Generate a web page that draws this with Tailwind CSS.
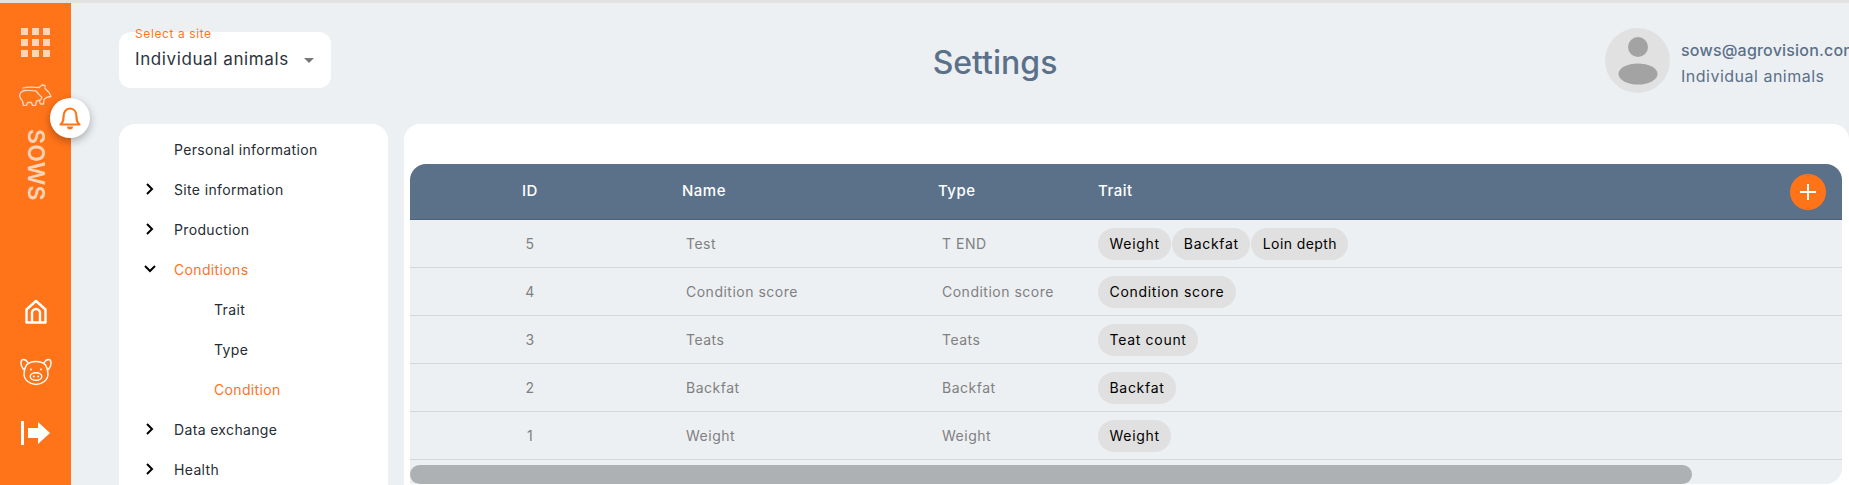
<!DOCTYPE html>
<html>
<head>
<meta charset="utf-8">
<script src="https://cdn.jsdelivr.net/npm/@tailwindcss/browser@4"></script>
</head>
<body class="h-[485px] overflow-hidden bg-[#edf0f3] font-['Inter',sans-serif] tracking-[0.3px]">
<div class="h-[3px] bg-[#e2e2e2]"></div>
<div class="flex h-[482px]">
  <aside class="relative w-[71px] shrink-0 bg-[#ff7419] flex flex-col items-center">
    <div class="mt-[25px] grid grid-cols-3 gap-[4px] w-[29px]">
      <i class="block h-[7px] bg-white/70"></i><i class="block h-[7px] bg-white/70"></i><i class="block h-[7px] bg-white/70"></i>
      <i class="block h-[7px] bg-white/70"></i><i class="block h-[7px] bg-white/70"></i><i class="block h-[7px] bg-white/70"></i>
      <i class="block h-[7px] bg-white/70"></i><i class="block h-[7px] bg-white/70"></i><i class="block h-[7px] bg-white/70"></i>
    </div>
    <svg class="mt-[26px] opacity-70" width="33" height="23" viewBox="18 83 33 23" fill="none" stroke="#fff" stroke-width="1.300" stroke-linejoin="round" stroke-linecap="round">
      <path d="M22 88c5-1.500 11-.5 16-.5l3-2.500 3 .5v3l4 4 2 4-4.500 1-2.500 2-.5 4.500h-3l-1-2.500"/>
      <path d="M19 97c-1-3 1-6 5-6.500 4-.5 8 .5 11 .5l2.500 3 3.500 3.500-1.500 2.500-4 1-1 4.500h-3l-1-3h-4l-1 3h-3l-1-4.500c-1-1-2-2-2.500-4z"/>
    </svg>
    <div class="mt-[24px] h-[70px] flex items-center justify-center [writing-mode:vertical-rl] text-[23px] font-semibold leading-none text-white/70">SOWS</div>
    <svg class="mt-[99px]" width="24" height="26" viewBox="0 0 24 26" fill="none" stroke="#fff" stroke-width="2.400" stroke-linejoin="round">
      <path d="M2.500 23.500V10.500L12 2l9.500 8.500v13z"/>
      <path d="M8 23.500V14a4 4 0 0 1 8 0v9.500"/>
    </svg>
    <svg class="mt-[31px]" width="32" height="30" viewBox="0 0 32 30" fill="none" stroke="#fff" stroke-width="1.400">
      <path d="M8 7C5.500 2.500 1 2.500 1 6.500c0 3.500 1.500 6 3.500 7.500"/>
      <path d="M24 7C26.500 2.500 31 2.500 31 6.500c0 3.500-1.500 6-3.500 7.500"/>
      <path d="M6.500 9C9 6.500 12.500 5.500 16 5.500S23 6.500 25.500 9C27.500 12 28 15 28 18c0 6-6 10.500-12 10.500S4 24 4 18c0-3 .5-6 2.500-9z"/>
      <ellipse cx="16" cy="20.500" rx="5.800" ry="3.800"/>
      <circle cx="13.800" cy="20.500" r="1" fill="#fff" stroke="none"/><circle cx="18.200" cy="20.500" r="1" fill="#fff" stroke="none"/>
      <circle cx="11" cy="13.500" r="1" fill="#fff" stroke="none"/><circle cx="21" cy="13.500" r="1" fill="#fff" stroke="none"/>
    </svg>
    <svg class="mt-[35px]" width="30" height="24" viewBox="0 0 30 24" fill="#fff">
      <rect x="0" y="0" width="3" height="24"/>
      <path d="M7 7h10V1l12 11-12 11v-6H7z"/>
    </svg>
    <button class="absolute left-[50px] top-[95px] w-10 h-10 rounded-full bg-white shadow-[0_3px_8px_rgba(0,0,0,0.3)] flex items-center justify-center">
      <svg width="22" height="24" viewBox="0 0 22 24" fill="none" stroke="#ff7419" stroke-width="2.200" stroke-linejoin="round">
        <path d="M1.500 18.500c2.500-2 3-4 3-7.500 0-5 2.500-8.500 6.500-8.500s6.500 3.500 6.500 8.500c0 3.500.5 5.500 3 7.500z"/>
        <path d="M8 20.500a3 3 0 0 0 6 0z" fill="#ff7419" stroke="none"/>
      </svg>
    </button>
  </aside>
  <div class="flex-1 min-w-0 flex flex-col">
    <header class="flex h-[121px] shrink-0 pl-[48px]">
      <div class="relative mt-[29px] w-[212px] h-[56px] rounded-[12px] bg-white shrink-0 flex items-center pl-[16px]">
        <span class="absolute left-[16px] -top-[6px] text-[12px] leading-[16px] tracking-[0.6px] text-[#ff7419]">Select a site</span>
        <span class="text-[17px] text-[#2b3440] tracking-[0.6px]">Individual animals</span>
        <span class="ml-[15px] w-0 h-0 border-x-[5px] border-x-transparent border-t-[5px] border-t-[#777]"></span>
      </div>
      <h1 class="w-[1274px] shrink-0 pl-[54px] text-center text-[32px] leading-[36px] mt-[42px] h-9 font-medium text-[#5a7189] tracking-normal">Settings</h1>
      <div class="mt-[25px] flex shrink-0">
        <div class="w-[65px] h-[65px] rounded-full bg-[#e1e1e1] flex items-center justify-center shrink-0">
          <svg width="40" height="48" viewBox="0 0 40 48" fill="#a3a3a3"><circle cx="20" cy="10" r="10"/><ellipse cx="20" cy="37" rx="19.500" ry="10.500"/></svg>
        </div>
        <div class="ml-[11px] whitespace-nowrap pt-[10px]">
          <p class="text-[16px] leading-[24px] font-medium text-[#5a7189] tracking-[0.2px]">sows@agrovision.com</p>
          <p class="text-[16px] leading-[24px] mt-[2px] text-[#5a7189] tracking-[0.5px]">Individual animals</p>
        </div>
      </div>
    </header>
    <div class="flex gap-[16px] pl-[48px] flex-1 min-h-0">
      <nav class="w-[269px] shrink-0 bg-white rounded-t-[16px] pt-[5px] text-[14px] text-[#262c33] tracking-[0.35px]">
        <div class="h-10 flex items-center pl-[55px]">Personal information</div>
        <div class="h-10 flex items-center pl-[27px]"><svg class="w-[8px] h-[12px] mr-[20px]" viewBox="0 0 8 12" fill="none" stroke="#000" stroke-width="2"><path d="M1 1l5 5-5 5"/></svg>Site information</div>
        <div class="h-10 flex items-center pl-[27px]"><svg class="w-[8px] h-[12px] mr-[20px]" viewBox="0 0 8 12" fill="none" stroke="#000" stroke-width="2"><path d="M1 1l5 5-5 5"/></svg>Production</div>
        <div class="h-10 flex items-center pl-[25px] text-[#ff7419]"><svg class="w-[12px] h-[8px] mr-[18px]" viewBox="0 0 12 8" fill="none" stroke="#000" stroke-width="2"><path d="M1 1l5 5 5-5"/></svg>Conditions</div>
        <div class="h-10 flex items-center pl-[95px]">Trait</div>
        <div class="h-10 flex items-center pl-[95px]">Type</div>
        <div class="h-10 flex items-center pl-[95px] text-[#ff7419]">Condition</div>
        <div class="h-10 flex items-center pl-[27px]"><svg class="w-[8px] h-[12px] mr-[20px]" viewBox="0 0 8 12" fill="none" stroke="#000" stroke-width="2"><path d="M1 1l5 5-5 5"/></svg>Data exchange</div>
        <div class="h-10 flex items-center pl-[27px]"><svg class="w-[8px] h-[12px] mr-[20px]" viewBox="0 0 8 12" fill="none" stroke="#000" stroke-width="2"><path d="M1 1l5 5-5 5"/></svg>Health</div>
      </nav>
      <main class="flex-1 min-w-0 bg-white rounded-t-[16px] pl-[6px] pr-[7px] pt-[40px]">
        <div class="h-[56px] rounded-t-[16px] bg-[#5a7189] border-b border-[#4d6277] grid grid-cols-[240px_256px_160px_1fr] items-center text-[15px] font-medium text-white tracking-[0.5px]">
          <div class="text-center">ID</div>
          <div class="pl-[32px]">Name</div>
          <div class="pl-[32px]">Type</div>
          <div class="pl-[32px] flex items-center justify-between pr-[16px]">Trait
            <span class="w-9 h-9 rounded-full bg-[#ff7419] flex items-center justify-center"><svg width="18" height="18" viewBox="0 0 18 18" stroke="#fff" stroke-width="2"><path d="M9 1v16M1 9h16"/></svg></span>
          </div>
        </div>
        <div class="bg-[#edf0f3] h-[264px] rounded-br-[16px] text-[14px] text-[#808080] tracking-[0.5px]">
          <div class="h-[48px] border-b border-[#d3d6da] grid grid-cols-[240px_256px_160px_1fr] items-center">
            <div class="text-center">5</div><div class="pl-[36px]">Test</div><div class="pl-[36px]">T END</div>
            <div class="pl-[32px] flex gap-[1px] text-black tracking-[0.7px]"><span class="h-8 px-[11.500px] rounded-full bg-[#e0e0e0] flex items-center">Weight</span><span class="h-8 px-[11.500px] rounded-full bg-[#e0e0e0] flex items-center">Backfat</span><span class="h-8 px-[11.500px] rounded-full bg-[#e0e0e0] flex items-center tracking-[0.4px]">Loin depth</span></div>
          </div>
          <div class="h-[48px] border-b border-[#d3d6da] grid grid-cols-[240px_256px_160px_1fr] items-center">
            <div class="text-center">4</div><div class="pl-[36px]">Condition score</div><div class="pl-[36px]">Condition score</div>
            <div class="pl-[32px] flex text-black tracking-[0.7px]"><span class="h-8 px-[11.500px] rounded-full bg-[#e0e0e0] flex items-center">Condition score</span></div>
          </div>
          <div class="h-[48px] border-b border-[#d3d6da] grid grid-cols-[240px_256px_160px_1fr] items-center">
            <div class="text-center">3</div><div class="pl-[36px]">Teats</div><div class="pl-[36px]">Teats</div>
            <div class="pl-[32px] flex text-black tracking-[0.7px]"><span class="h-8 px-[11.500px] rounded-full bg-[#e0e0e0] flex items-center">Teat count</span></div>
          </div>
          <div class="h-[48px] border-b border-[#d3d6da] grid grid-cols-[240px_256px_160px_1fr] items-center">
            <div class="text-center">2</div><div class="pl-[36px]">Backfat</div><div class="pl-[36px]">Backfat</div>
            <div class="pl-[32px] flex text-black tracking-[0.7px]"><span class="h-8 px-[11.500px] rounded-full bg-[#e0e0e0] flex items-center">Backfat</span></div>
          </div>
          <div class="h-[48px] border-b border-[#d3d6da] grid grid-cols-[240px_256px_160px_1fr] items-center">
            <div class="text-center">1</div><div class="pl-[36px]">Weight</div><div class="pl-[36px]">Weight</div>
            <div class="pl-[32px] flex text-black tracking-[0.7px]"><span class="h-8 px-[11.500px] rounded-full bg-[#e0e0e0] flex items-center">Weight</span></div>
          </div>
          <div class="mt-[5px] w-[1282px] h-[19px] rounded-[10px] bg-[#aeb1b4]"></div>
        </div>
      </main>
    </div>
  </div>
</div>
</body>
</html>
